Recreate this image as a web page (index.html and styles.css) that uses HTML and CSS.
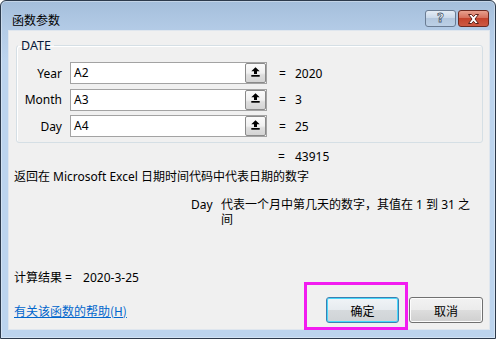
FILE: index.html
```html
<!DOCTYPE html>
<html lang="zh-CN">
<head>
<meta charset="utf-8">
<title>函数参数</title>
<link rel="stylesheet" href="styles.css">
</head>
<body>
<div class="window">
  <div class="titlebar">
    <span class="title">函数参数</span>
    <div class="caption-btns">
      <span class="cbtn help">?</span>
      <span class="cbtn close">
        <svg width="13" height="10" viewBox="0 0 13 10"><path d="M1.5 0.5h3l2 2.2 2-2.2h3l-3.5 4.5 3.5 4.5h-3l-2-2.2-2 2.2h-3l3.5-4.5z" fill="#fff" stroke="#5a2018" stroke-width="1"/></svg>
      </span>
    </div>
  </div>
  <div class="client">
    <fieldset class="group">
      <legend>DATE</legend>
      <div class="args">
        <span class="lbl">Year</span>
        <div class="ref"><span class="reftext">A2</span><span class="refbtn"><svg width="9" height="10" viewBox="0 0 9 10"><path d="M4.5 0.3L8.7 4.3H6V7H3V4.3H0.3Z" fill="#000"/><rect x="0.3" y="8" width="8.4" height="1.7" fill="#000"/></svg></span></div>
        <span class="eq">=</span>
        <span class="val">2020</span>

        <span class="lbl">Month</span>
        <div class="ref"><span class="reftext">A3</span><span class="refbtn"><svg width="9" height="10" viewBox="0 0 9 10"><path d="M4.5 0.3L8.7 4.3H6V7H3V4.3H0.3Z" fill="#000"/><rect x="0.3" y="8" width="8.4" height="1.7" fill="#000"/></svg></span></div>
        <span class="eq">=</span>
        <span class="val">3</span>

        <span class="lbl">Day</span>
        <div class="ref"><span class="reftext">A4</span><span class="refbtn"><svg width="9" height="10" viewBox="0 0 9 10"><path d="M4.5 0.3L8.7 4.3H6V7H3V4.3H0.3Z" fill="#000"/><rect x="0.3" y="8" width="8.4" height="1.7" fill="#000"/></svg></span></div>
        <span class="eq">=</span>
        <span class="val">25</span>
      </div>
    </fieldset>

    <div class="total"><span class="teq">=</span><span>43915</span></div>
    <div class="desc">返回在 Microsoft Excel 日期时间代码中代表日期的数字</div>
    <div class="argdesc">
      <span class="argname">Day</span>
      <span class="argtext">代表一个月中第几天的数字，其值在 1 到 31 之间</span>
    </div>

    <div class="result">计算结果 = <span class="resval">2020-3-25</span></div>

    <div class="footer">
      <a class="help-link" href="#">有关该函数的帮助(H)</a>
      <div class="buttons">
        <button class="btn default">确定</button>
        <button class="btn">取消</button>
      </div>
    </div>
    <div class="highlight"></div>
  </div>
</div>
</body>
</html>
```

FILE: styles.css
```css
* { box-sizing: border-box; }
html, body { margin: 0; padding: 0; background: #fff; }
body {
  font-family: "Noto Sans", "Noto Sans CJK SC", sans-serif;
  font-size: 12px;
  line-height: 15px;
  color: #000;
}
.window {
  width: 496px;
  height: 339px;
  border: 1px solid #2c3a4c;
  border-radius: 6px 6px 0 0;
  background: linear-gradient(to bottom, #a4bedb 0px, #b3cbe6 28px, #bcd4ee 60px, #bcd4ee 100%);
  display: flex;
  flex-direction: column;
  box-shadow: inset 0 0 0 1px rgba(255,255,255,0.35);
}
.titlebar {
  height: 29px;
  display: flex;
  align-items: flex-start;
  justify-content: space-between;
  padding: 0 6px 0 11px;
}
.title {
  margin-top: 11px;
  font-family: "Noto Sans CJK SC", sans-serif;
  font-size: 12px;
  line-height: 15px;
  color: #000;
}
.caption-btns {
  display: flex;
  gap: 2px;
  margin-top: 9px;
}
.cbtn {
  width: 31px;
  height: 17px;
  border-radius: 3px;
  display: flex;
  align-items: center;
  justify-content: center;
}
.help {
  border: 1px solid #6a7c93;
  background: linear-gradient(to bottom, #e4ecf5 0%, #cad9ea 45%, #b3c7de 50%, #bcd0e6 100%);
  font-family: "DejaVu Sans", sans-serif;
  font-weight: bold;
  font-size: 12px;
  color: #fff;
  -webkit-text-stroke: 0.8px #4a5a70;
  line-height: 15px;
}
.close {
  border: 1px solid #6c2a21;
  background: linear-gradient(to bottom, #e8a08e 0%, #d6705c 45%, #c4432c 50%, #cd5a44 100%);
}
.client {
  position: relative;
  flex: 1;
  margin: 0 5px 8px 7px;
  background: #f0f0f0;
  border: 1px solid #dfe6ee;
  padding: 7px 6px 0 5px;
  display: flex;
  flex-direction: column;
}
.group {
  margin: 0 0 0 2px;
  padding: 9px 0 5px 0;
  border: 1px solid #d5dfe5;
  border-radius: 3px;
  box-shadow: inset 1px 1px 0 #fff;
  min-width: 0;
}
.group legend {
  margin-left: 1px;
  padding: 0 3px;
  line-height: 15px;
  font-size: 12.5px;
  color: #0a1a3a;
}
.args {
  display: grid;
  grid-template-columns: 53px 197px 28px 1fr;
  grid-auto-rows: 22px;
  row-gap: 4.5px;
  align-items: center;
}
.lbl {
  text-align: right;
  padding-right: 8px;
}
.ref {
  height: 22px;
  border: 1px solid #a3a3a3;
  background: #fff;
  display: flex;
  align-items: stretch;
}
.reftext {
  flex: 1;
  padding-left: 3px;
  line-height: 19px;
}
.refbtn {
  width: 21px;
  border: 1px solid #8a8a8a;
  border-radius: 2px;
  background: linear-gradient(to bottom, #fbfbfb 0%, #f0f0f0 50%, #dedede 60%, #d4d4d4 100%);
  display: flex;
  align-items: center;
  justify-content: center;
  padding-bottom: 3px;
}
.eq { padding-left: 12px; }
.val { padding-left: 0; }

.total {
  margin-top: 6px;
  padding-left: 264px;
  display: flex;
}
.teq { width: 17px; }
.desc {
  margin-top: 5px;
}
.argdesc {
  margin-top: 13px;
  display: flex;
  padding-left: 177px;
}
.argname { width: 30px; }
.argtext { width: 256px; }

.result {
  margin-top: auto;
}
.resval { margin-left: 8px; }

.footer {
  margin-top: 12px;
  display: flex;
  align-items: center;
  justify-content: space-between;
  padding: 0 0 6px 0;
}
.help-link {
  color: #0066cc;
  text-decoration: underline;
  font-family: "Noto Sans CJK SC", sans-serif;
}
.buttons {
  display: flex;
  gap: 10px;
}
.btn {
  width: 73px;
  height: 26px;
  padding: 0;
  font-family: "Noto Sans CJK SC", sans-serif;
  font-size: 12px;
  color: #000;
  border: 1px solid #707070;
  border-radius: 3px;
  background: linear-gradient(to bottom, #f2f2f2 0%, #ebebeb 50%, #dddddd 51%, #cfcfcf 100%);
  box-shadow: inset 0 0 0 1px #fcfcfc;
}
.btn + .btn { width: 74px; }
.btn.default {
  border-color: #3c7fb1;
  box-shadow: inset 0 0 0 1px #48d8fb;
  background: linear-gradient(to bottom, #f0f4f7 0%, #e6ebef 50%, #d6dadd 51%, #cfd3d6 100%);
}
.highlight {
  position: absolute;
  left: 295px;
  top: 251px;
  width: 104px;
  height: 48px;
  border: 3px solid #f21cf0;
  pointer-events: none;
}
```
